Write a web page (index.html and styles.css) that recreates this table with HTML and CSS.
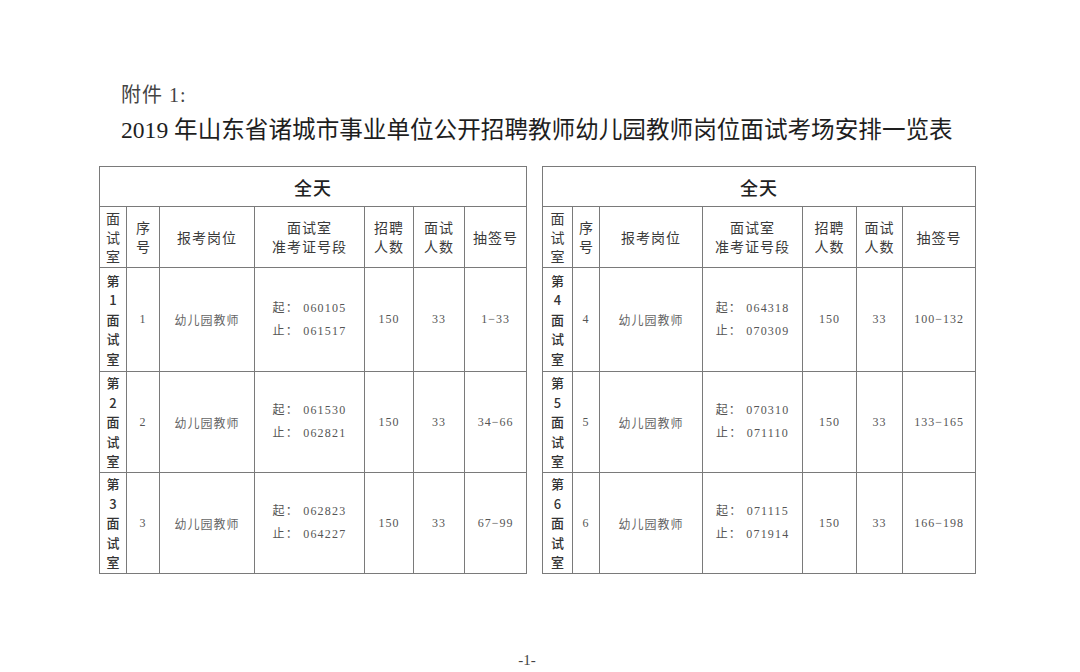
FILE: index.html
```html
<!DOCTYPE html>
<html lang="zh">
<head>
<meta charset="utf-8">
<link rel="stylesheet" href="styles.css">
</head>
<body>
<div class="page">
  <div class="head">
    <div class="annex">附件 1:</div>
    <h1 class="title">2019 年山东省诸城市事业单位公开招聘教师幼儿园教师岗位面试考场安排一览表</h1>
  </div>
  <div class="tables">
    <table class="sched left">
      <colgroup><col class="c1"><col class="c2"><col class="c3"><col class="c4"><col class="c5"><col class="c6"><col class="c7"></colgroup>
      <tr class="r-day"><th colspan="7" class="day">全天</th></tr>
      <tr class="r-head">
        <th class="vt">面<br>试<br>室</th><th class="vt">序<br>号</th><th>报考岗位</th><th>面试室<br>准考证号段</th><th>招聘<br>人数</th><th>面试<br>人数</th><th>抽签号</th>
      </tr>
      <tr class="r-data first">
        <td class="room">第<br>1<br>面<br>试<br>室</td><td>1</td><td class="pos">幼儿园教师</td><td class="ids">起： 060105<br>止： 061517</td><td>150</td><td>33</td><td>1−33</td>
      </tr>
      <tr class="r-data">
        <td class="room">第<br>2<br>面<br>试<br>室</td><td>2</td><td class="pos">幼儿园教师</td><td class="ids">起： 061530<br>止： 062821</td><td>150</td><td>33</td><td>34−66</td>
      </tr>
      <tr class="r-data">
        <td class="room">第<br>3<br>面<br>试<br>室</td><td>3</td><td class="pos">幼儿园教师</td><td class="ids">起： 062823<br>止： 064227</td><td>150</td><td>33</td><td>67−99</td>
      </tr>
    </table>
    <table class="sched right">
      <colgroup><col class="c1"><col class="c2"><col class="c3"><col class="c4"><col class="c5"><col class="c6"><col class="c7"></colgroup>
      <tr class="r-day"><th colspan="7" class="day">全天</th></tr>
      <tr class="r-head">
        <th class="vt">面<br>试<br>室</th><th class="vt">序<br>号</th><th>报考岗位</th><th>面试室<br>准考证号段</th><th>招聘<br>人数</th><th>面试<br>人数</th><th>抽签号</th>
      </tr>
      <tr class="r-data first">
        <td class="room">第<br>4<br>面<br>试<br>室</td><td>4</td><td class="pos">幼儿园教师</td><td class="ids">起： 064318<br>止： 070309</td><td>150</td><td>33</td><td>100−132</td>
      </tr>
      <tr class="r-data">
        <td class="room">第<br>5<br>面<br>试<br>室</td><td>5</td><td class="pos">幼儿园教师</td><td class="ids">起： 070310<br>止： 071110</td><td>150</td><td>33</td><td>133−165</td>
      </tr>
      <tr class="r-data">
        <td class="room">第<br>6<br>面<br>试<br>室</td><td>6</td><td class="pos">幼儿园教师</td><td class="ids">起： 071115<br>止： 071914</td><td>150</td><td>33</td><td>166−198</td>
      </tr>
    </table>
  </div>
  <div class="pagenum">-1-</div>
</div>
</body>
</html>
```
FILE: styles.css
```css
html, body {
  margin: 0;
  padding: 0;
  background: #ffffff;
}
body {
  width: 1080px;
  height: 672px;
  overflow: hidden;
  font-family: "Liberation Serif", "Noto Sans CJK SC", serif;
  color: #333;
}
.page {
  padding-top: 82px;
}
.head {
  padding-left: 121px;
}
.annex {
  font-size: 20px;
  line-height: 26px;
  color: #444;
  letter-spacing: 1px;
}
.title {
  margin: 6px 0 0 0;
  font-size: 23.6px;
  line-height: 32px;
  font-weight: normal;
  color: #1e1e1e;
  white-space: nowrap;
  letter-spacing: 0;
}
.tables {
  display: flex;
  gap: 15px;
  margin-top: 20px;
  padding-left: 99px;
}
.sched {
  border-collapse: collapse;
  table-layout: fixed;
  font-family: "Noto Sans CJK SC", sans-serif;
}
.sched th, .sched td {
  border: 1px solid #7a7a7a;
  padding: 0;
  text-align: center;
  vertical-align: middle;
}
.sched.left { width: 427px; }
.sched.right { width: 433px; }
.left .c1 { width: 27px; }
.left .c2 { width: 33px; }
.left .c3 { width: 95px; }
.left .c4 { width: 110px; }
.left .c5 { width: 49px; }
.left .c6 { width: 51px; }
.left .c7 { width: 62px; }
.right .c1 { width: 30px; }
.right .c2 { width: 27px; }
.right .c3 { width: 103px; }
.right .c4 { width: 100px; }
.right .c5 { width: 54px; }
.right .c6 { width: 46px; }
.right .c7 { width: 73px; }
.r-day { height: 40px; }
.r-head { height: 61px; }
.r-data { height: 101px; }
.r-data.first { height: 104px; }
.day {
  font-size: 18px;
  font-weight: 500;
  color: #222;
  letter-spacing: 1px;
}
.r-head th {
  font-size: 14px;
  font-weight: normal;
  line-height: 19px;
  color: #3a3a3a;
  letter-spacing: 1px;
}
.r-head th.vt {
  line-height: 19px;
  letter-spacing: 0;
}
.r-data td {
  font-family: "Liberation Serif", "Noto Sans CJK SC", serif;
  font-size: 12px;
  color: #555;
  letter-spacing: 1px;
}
.r-data td.room {
  font-family: "Noto Sans CJK SC", sans-serif;
  font-size: 13px;
  line-height: 19.4px;
  font-weight: 500;
  color: #333;
  letter-spacing: 0;
}
.r-data td.pos {
  font-family: "Noto Sans CJK SC", sans-serif;
  font-size: 12px;
  color: #666;
  letter-spacing: 1px;
}
.r-data td.ids {
  line-height: 23px;
  font-size: 12px;
  letter-spacing: 1.2px;
}
.pagenum {
  text-align: center;
  font-size: 15px;
  color: #444;
  margin-top: 78px;
  padding-right: 26px;
}
```
